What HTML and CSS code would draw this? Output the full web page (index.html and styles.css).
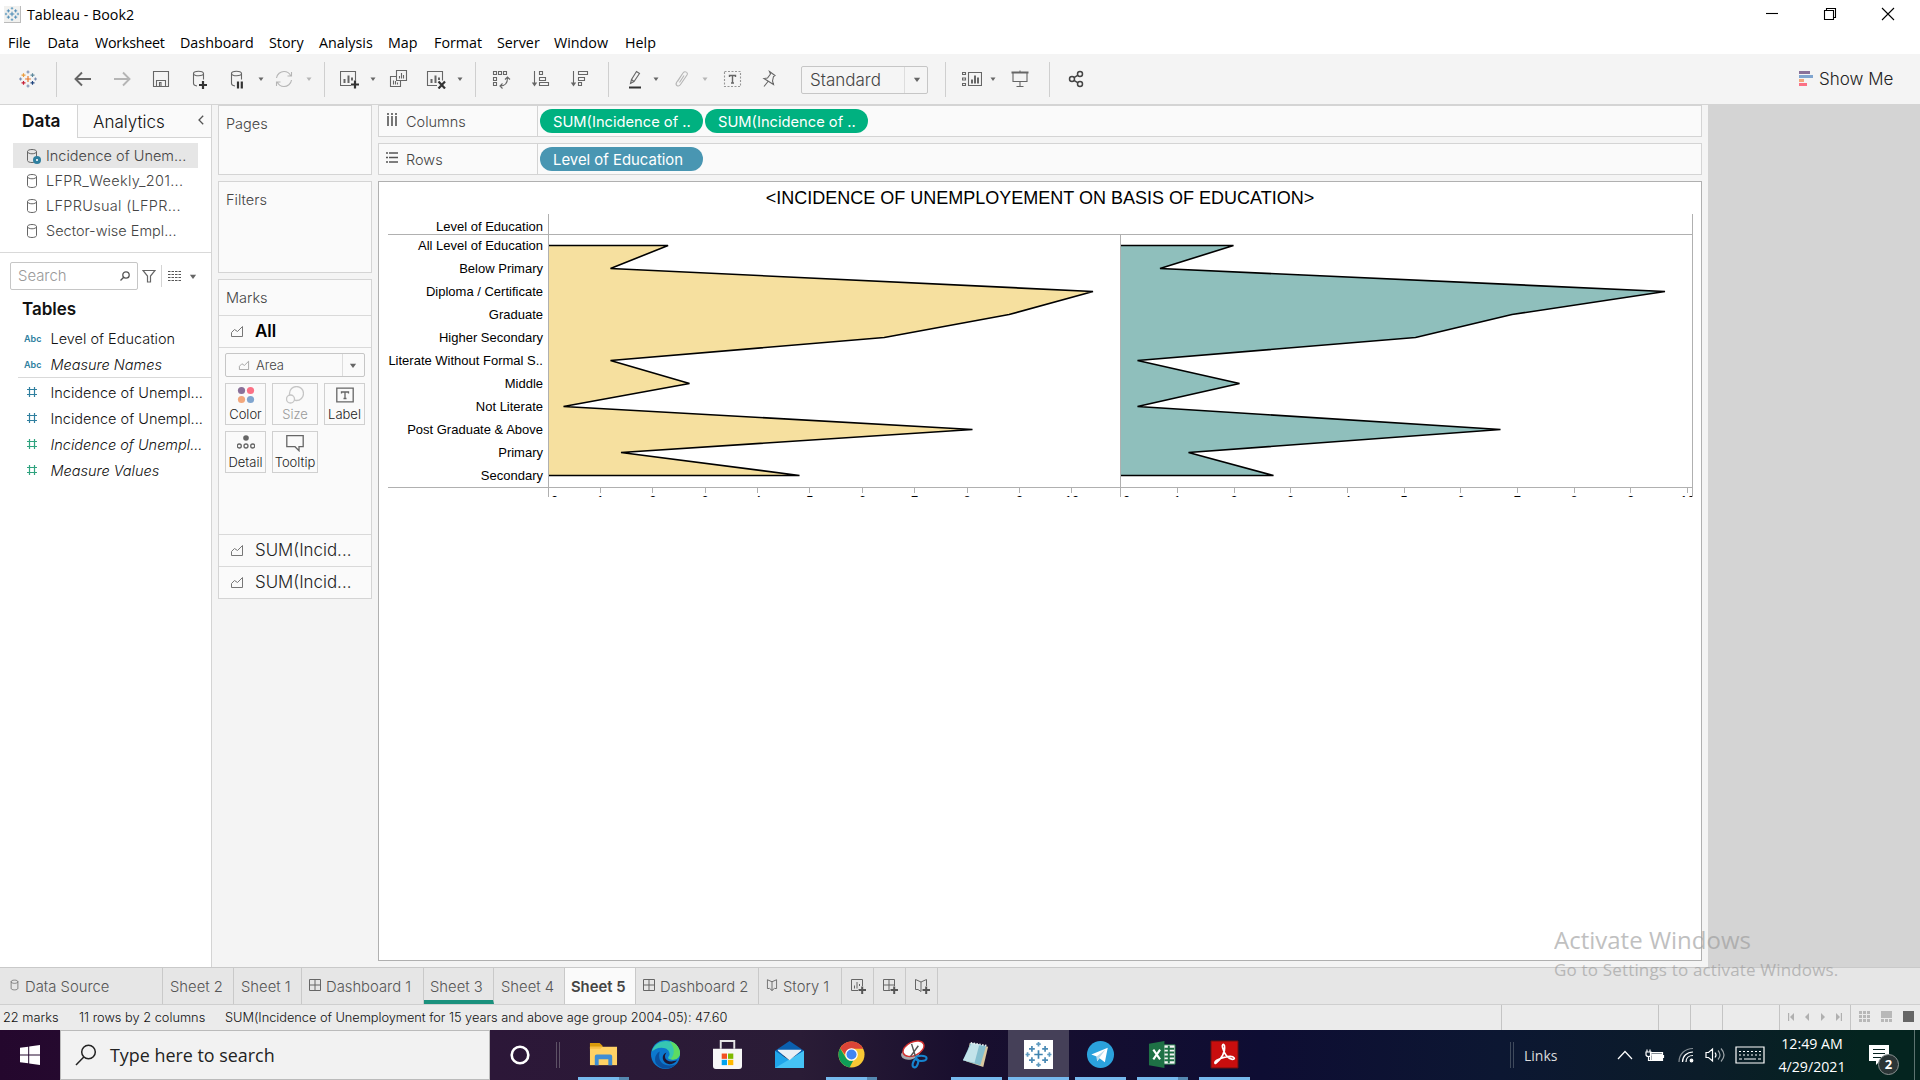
FILE: index.html
```html
<!DOCTYPE html>
<html lang="en">
<head>
<meta charset="utf-8">
<title>Tableau - Book2</title>
<link rel="stylesheet" href="styles.css">
</head>
<body>
<svg class="defs" width="0" height="0">
  <symbol id="caret" viewBox="0 0 8 20"><path d="M1.5 8.5h5L4 12z" fill="currentColor"/></symbol>
  <symbol id="db" viewBox="0 0 12 16"><path d="M1.5 3.5v9c0 1.200 2 2 4.500 2s4.500-.8 4.500-2v-9c0-1.200-2-2-4.500-2s-4.500.8-4.500 2c0 1.300 2 2.300 4.500 2.300s4.500-1 4.500-2.300" fill="none" stroke="currentColor"/></symbol>
  <symbol id="area" viewBox="0 0 14 12"><path d="M1.500 11.500V7.500L4.500 4.500L7.500 6.500L12.500 1.500v10z" fill="none" stroke="currentColor"/></symbol>
  <symbol id="hash" viewBox="0 0 12 12"><path d="M3.500 1v10M8.500 1v10M1 3.500h10M1 8.500h10" fill="none" stroke="currentColor" stroke-width="1.200"/></symbol>
  <symbol id="dash" viewBox="0 0 12 12"><path d="M.5.5h11v11H.500zM6 .5v11M.5 6h11" fill="none" stroke="currentColor"/></symbol>
  <symbol id="book" viewBox="0 0 12 13"><path d="M6 3v9.500M6 3L1 .8v9.500h2M6 3l5-2.200v9.500H9M6 12.500L3.200 10M6 12.500L8.800 10" fill="none" stroke="currentColor"/></symbol>
  <symbol id="logo" viewBox="0 0 20 20"><path d="M10 6.800v6.400M6.800 10h6.400" class="l1"/><path d="M5 3.500v4.400M2.800 5.700h4.400" class="l2"/><path d="M15 3.500v4.400M12.800 5.700h4.400" class="l3"/><path d="M5 12.100v4.400M2.800 14.300h4.400" class="l4"/><path d="M15 12.100v4.400M12.800 14.300h4.400" class="l5"/><path d="M10 .5v3.400M8.300 2.200h3.400M10 16.100v3.400M8.300 17.800h3.400M1.700 8.300v3.400M0 10h3.400M18.300 8.300v3.400M16.600 10H20" class="l6"/></symbol>
</svg>

<div class="window">
  <header class="titlebar">
    <svg class="app-icon" viewBox="-1 -1 22 22"><use href="#logo" width="20" height="20"/></svg>
    <span class="app-title">Tableau - Book2</span>
    <div class="window-buttons">
      <svg viewBox="0 0 14 14"><path d="M1 6.500h12"/></svg>
      <svg viewBox="0 0 14 14"><path d="M1.500 3.500h9v9h-9zM3.500 3.500v-2h9v9h-2"/></svg>
      <svg viewBox="0 0 14 14"><path d="M1 1l12 12M13 1L1 13"/></svg>
    </div>
  </header>
  <nav class="menubar">
    <span>File</span><span>Data</span><span class="tight">Worksheet</span><span>Dashboard</span><span>Story</span><span>Analysis</span><span>Map</span><span>Format</span><span>Server</span><span>Window</span><span>Help</span>
  </nav>

  <div class="toolbar">
    <svg class="icon color-logo" viewBox="0 0 20 20"><use href="#logo" x="1" y="1" width="18" height="18"/></svg>
    <i class="sep"></i>
    <svg class="icon bold" viewBox="0 0 20 20"><path d="M18 10H3M9 3.500L2.500 10L9 16.500"/></svg>
    <svg class="icon bold off" viewBox="0 0 20 20"><path d="M2 10h15M11 3.500L17.500 10L11 16.500"/></svg>
    <svg class="icon" viewBox="0 0 20 20"><path d="M2.500 2.500h15v15h-15zM5.500 17.500v-6h9v6M8.500 17v-3.500h1.500V17"/></svg>
    <svg class="icon" viewBox="0 0 20 20"><path d="M3.500 4.500v10c0 1.500 1 2 3.500 2.500M13.500 4.500v6M3.500 4.500c0-3 10-3 10 0s-10 3-10 0"/><path class="dark" d="M9 16h8M13 12v8"/></svg>
    <svg class="icon" viewBox="0 0 20 20"><path d="M4.500 4.500v10c0 1.500 1 2 3.500 2.500M14.500 4.500v6M4.500 4.500c0-3 10-3 10 0s-10 3-10 0"/><path class="dark" d="M11 12.500v7M14.800 12.500v7"/></svg>
    <svg class="caret"><use href="#caret"/></svg>
    <svg class="icon off" viewBox="0 0 20 20"><path d="M2.500 9C3 5 6.500 2.500 10 2.500c3 0 5.500 1.500 6.800 4.500M17.500 11c-.5 4-4 6.500-7.500 6.500c-3 0-5.500-1.500-6.800-4.500M13.500 7h4V3M6.500 13h-4v4"/></svg>
    <svg class="caret off"><use href="#caret"/></svg>
    <i class="sep"></i>
    <svg class="icon" viewBox="0 0 20 20"><path d="M11 16.500H.5v-14h15v9"/><path class="mid" d="M4.500 14v-4M8.500 14V6.500M12 11.500V8.500"/><path class="dark" d="M11 15.500h8M15 11.500v8"/></svg>
    <svg class="caret"><use href="#caret"/></svg>
    <svg class="icon" viewBox="0 0 20 20"><path d="M7.500 1.500h10v10h-10zM7 7.500H1.500v10h10V12M10.500 9.500V7M12.500 9.500V4M14.500 9.500V6M4.500 15.500v-4M6.500 15.500V12M8.500 15.500v-2"/></svg>
    <svg class="icon" viewBox="0 0 20 20"><path d="M11 16.500H1.500v-14h15v9"/><path class="mid" d="M5.500 14v-4M9.500 14V6.500M13 11V8.500"/><path class="dark" d="M12.500 12.500l6.500 7M19 12.500l-6.500 7"/></svg>
    <svg class="caret"><use href="#caret"/></svg>
    <i class="sep"></i>
    <svg class="icon" viewBox="0 0 20 20"><path d="M2.500 2.500h3v3h-3zM7.500 2.500h3v3h-3zM12.500 2.500h3v3h-3zM2.500 8.500h3v3h-3zM2.500 13.500h3v3h-3zM9 17c5 0 7.500-3 7.500-8M11.500 14.500L9 17l2.500 2.500M14 10.500L16.500 8L19 10.500"/></svg>
    <svg class="icon" viewBox="0 0 20 20"><path d="M3.500 2v13M8.500 2.500h3v3h-3zM8.500 8.500h6v3h-6zM8.500 13.500h9v3h-9z"/><path class="fill" d="M.8 13.500h5.400L3.500 17.500z"/></svg>
    <svg class="icon" viewBox="0 0 20 20"><path d="M3.500 2v13M8.500 2.500h9v3h-9zM8.500 8.500h6v3h-6zM8.500 13.500h3v3h-3z"/><path class="fill" d="M.8 13.500h5.400L3.500 17.500z"/></svg>
    <i class="sep"></i>
    <svg class="icon" viewBox="0 0 20 20"><path d="M5.500 14.500l1-4L11.500 2.500l3 2L9 12.500zM6.500 10.500l2.500 2"/><path class="dark mid" d="M4 18.500h12"/></svg>
    <svg class="caret"><use href="#caret"/></svg>
    <svg class="icon off" viewBox="0 0 20 20"><path d="M6.500 12.500l5.500-8.500c2-2.500 5.500-.5 4 2L9.500 15.500c-2 3-5.500 1-4-2L11 5.500M8.500 13.500L13 6.500"/></svg>
    <svg class="caret off"><use href="#caret"/></svg>
    <svg class="icon" viewBox="-1 0 20 20"><path stroke-dasharray="2 1.500" d="M1.500 2.500h16v15h-16z" opacity=".65"/><path d="M6.500 8V6.500h6V8M9.500 6.500v7.500M8 14h3" stroke-width="1.400"/></svg>
    <svg class="icon" viewBox="0 0 20 20"><path d="M10.500 2.500l5.500 4-1.500 1-1 4.500 1 3.500L5 9.500l3.500-.5 3-4zM9 12.500l-4 5"/></svg>
    <div class="fit-select"><span>Standard</span><svg class="caret big"><use href="#caret"/></svg></div>
    <i class="sep"></i>
    <svg class="icon" viewBox="0 0 20 20"><path d="M.5 3.500h3v2h-3zM.5 9h3v2h-3zM.5 14.500h3v2h-3zM6.500 3.500h13v13h-13z"/><path class="mid" d="M10 14.500v-4M13 14.500V6.500M16 14.500v-6"/></svg>
    <svg class="caret"><use href="#caret"/></svg>
    <svg class="icon" viewBox="0 0 20 20"><path class="mid" d="M1.500 3.500h17"/><path d="M3 4v8.500h14V4M10 12.500v5M6.500 17.500h7M10 1.500v2"/></svg>
    <i class="sep"></i>
    <svg class="icon share" viewBox="0 0 20 20"><circle cx="6" cy="10" r="2.500"/><circle cx="14" cy="5" r="2.500"/><circle cx="14" cy="15" r="2.500"/><path d="M8 8.700l4-2.500M8 11.300l4 2.500"/></svg>
    <div class="show-me">
      <svg viewBox="0 0 14 16"><path fill="#8a7199" d="M0 0h11v3H0z"/><path fill="#80a5cf" d="M0 4h14v3H0z"/><path fill="#f2a77c" d="M0 8h5v3H0z"/><path fill="#fb7185" d="M0 12h8v3H0z"/></svg>
      <span>Show Me</span>
    </div>
  </div>

  <main class="workspace">
    <aside class="data-pane">
      <div class="pane-tabs"><b>Data</b><div><span>Analytics</span><svg viewBox="0 0 6 10"><path d="M5.200.7L1 5l4.200 4.300"/></svg></div></div>
      <ul class="sources">
        <li class="selected"><svg viewBox="0 0 12 16"><use href="#db"/></svg><em></em>Incidence of Unem...</li>
        <li class="loose"><svg viewBox="0 0 12 16"><use href="#db"/></svg>LFPR_Weekly_201...</li>
        <li class="loose"><svg viewBox="0 0 12 16"><use href="#db"/></svg>LFPRUsual (LFPR...</li>
        <li><svg viewBox="0 0 12 16"><use href="#db"/></svg>Sector-wise Empl...</li>
      </ul>
      <div class="search-row">
        <div class="search"><span>Search</span><svg viewBox="0 0 10 10"><circle cx="6" cy="4" r="3.200"/><path d="M3.700 6.300L.5 9.500"/></svg></div>
        <svg class="funnel" viewBox="0 0 14 14"><path d="M1 1.500h12L8.500 7v6h-3V7z"/></svg>
        <i></i>
        <svg class="grid-view" viewBox="0 0 13 10"><path d="M0 .5h13M0 3.500h13M0 6.500h13M0 9.500h13" stroke-dasharray="2.500 1"/></svg>
        <svg class="caret big"><use href="#caret"/></svg>
      </div>
      <h2>Tables</h2>
      <ul class="fields dims">
        <li><abbr>Abc</abbr>Level of Education</li>
        <li class="gen"><abbr>Abc</abbr>Measure Names</li>
      </ul>
      <ul class="fields">
        <li><svg><use href="#hash"/></svg>Incidence of Unempl...</li>
        <li><svg><use href="#hash"/></svg>Incidence of Unempl...</li>
        <li class="gen"><svg class="green"><use href="#hash"/></svg>Incidence of Unempl...</li>
        <li class="gen"><svg class="green"><use href="#hash"/></svg>Measure Values</li>
      </ul>
    </aside>

    <section class="cards">
      <div class="card pages">Pages</div>
      <div class="card filters">Filters</div>
      <div class="card marks">
        <div class="marks-title">Marks</div>
        <div class="mark-layer all"><svg><use href="#area"/></svg><b>All</b></div>
        <div class="mark-body">
          <div class="mark-type"><svg><use href="#area"/></svg><span>Area</span><svg class="caret big"><use href="#caret"/></svg></div>
          <div class="mark-buttons">
            <div><svg viewBox="0 0 18 18"><circle cx="4.500" cy="4.500" r="3.600" fill="#8a7199"/><circle cx="13.500" cy="4.500" r="3.600" fill="#fb7185"/><circle cx="4.500" cy="13.500" r="3.600" fill="#f2a77c"/><circle cx="13.500" cy="13.500" r="3.600" fill="#80a5cf"/></svg>Color</div>
            <div class="disabled"><svg viewBox="0 0 18 18"><circle cx="10.500" cy="7.500" r="7" class="ln"/><circle cx="4.500" cy="13" r="4" class="ln bg"/></svg><span>Size</span></div>
            <div><svg viewBox="0 0 18 18"><path class="ln" stroke-width="1.500" d="M.8 2.200h16.400v13.600H.8zM5.500 7.500V6h7v1.500M9 6v6.500M7.500 12.500h3"/></svg>Label</div>
            <div><svg viewBox="0 0 18 18"><circle cx="9" cy="4" r="2.800" fill="#666"/><circle cx="2.300" cy="12" r="2" class="ln"/><circle cx="9" cy="12" r="2" class="ln"/><circle cx="15.700" cy="12" r="2" class="ln"/></svg>Detail</div>
            <div><svg viewBox="0 0 18 18"><path class="ln" stroke-width="1.500" d="M.8 1.700h16.400v11H13v4l-4-4H.8z"/></svg>Tooltip</div>
          </div>
        </div>
        <div class="mark-layer"><svg><use href="#area"/></svg>SUM(Incid...</div>
        <div class="mark-layer"><svg><use href="#area"/></svg>SUM(Incid...</div>
      </div>
    </section>

    <section class="sheet">
      <div class="shelf"><div class="shelf-name"><svg viewBox="0 0 12 14"><path d="M2 3v10M6 3v10M10 3v10M2 0v2M6 0v2M10 0v2"/></svg>Columns</div><span class="pill green">SUM(Incidence of ..</span><span class="pill green">SUM(Incidence of ..</span></div>
      <div class="shelf"><div class="shelf-name"><svg viewBox="0 0 12 14"><path d="M3 2h9M3 6.500h9M3 11h9M0 2h2M0 6.500h2M0 11h2"/></svg>Rows</div><span class="pill blue">Level of Education</span></div>
      <div class="view">
        <h1>&lt;INCIDENCE OF UNEMPLOYEMENT ON BASIS OF EDUCATION&gt;</h1>
        <div class="chart">
          <div class="row-header">
            <div class="header-title">Level of Education</div>
            <div class="categories"><span>All Level of Education</span><span>Below Primary</span><span>Diploma / Certificate</span><span>Graduate</span><span>Higher Secondary</span><span>Literate Without Formal S..</span><span>Middle</span><span>Not Literate</span><span>Post Graduate &amp; Above</span><span>Primary</span><span>Secondary</span></div>
          </div>
          <div class="plot">
            <div class="panes">
              <svg class="pane" viewBox=".5 0 571 252"><path class="gold" d="M0 10.500L119.600 10.500L62 33.500L544.500 56.500L460.600 79.500L335.700 102.500L62 125.500L141 148.500L15 171.500L424 194.500L72.500 217.500L251 240.500H0"/></svg>
              <svg class="pane" viewBox="0 0 571 252"><path class="teal" d="M0 10.500L112.500 10.500L39 33.500L544 56.500L391 79.500L294.500 102.500L16.500 125.500L118.500 148.500L16.500 171.500L379.500 194.500L67.500 217.500L152.500 240.500H0"/></svg>
            </div>
            <div class="axes">
              <div class="axis first"><span>0</span><span>1</span><span>2</span><span>3</span><span>4</span><span>5</span><span>6</span><span>7</span><span>8</span><span>9</span><span>10</span></div>
              <div class="axis second"><span>0</span><span>1</span><span>2</span><span>3</span><span>4</span><span>5</span><span>6</span><span>7</span><span>8</span><span>9</span><span>10</span></div>
            </div>
          </div>
        </div>
      </div>
    </section>
    <div class="outside"></div>
  </main>

  <div class="sheet-tabs">
    <div class="source"><svg viewBox="0 0 12 16"><use href="#db"/></svg>Data Source</div>
    <div>Sheet 2</div><div>Sheet 1</div>
    <div><svg viewBox="0 0 12 12"><use href="#dash"/></svg>Dashboard 1</div>
    <div class="marked">Sheet 3</div><div>Sheet 4</div><div class="active">Sheet 5</div>
    <div><svg viewBox="0 0 12 12"><use href="#dash"/></svg>Dashboard 2</div>
    <div><svg viewBox="0 0 12 13"><use href="#book"/></svg>Story 1</div>
    <div class="add"><svg viewBox="0 0 16 16"><path d="M8 12.500H1.500V1.500h11V8M4.500 10.500v-3M7 10.500V4M9.500 8V6"/><path class="dark" d="M8.500 12H16M12.200 8.500V16"/></svg></div>
    <div class="add"><svg viewBox="0 0 16 16"><path d="M8 12.500H1.500V1.500h11V8M7 1.500v11M1.500 7h11"/><path class="dark" d="M8.500 12H16M12.200 8.500V16"/></svg></div>
    <div class="add"><svg viewBox="0 0 16 16"><path d="M7 4v9.500M7 4L1.500 1.500v10H4l3 2M7 4l5.500-2.500V8"/><path class="dark" d="M8.500 12H16M12.200 8.500V16"/></svg></div>
  </div>

  <footer class="status">
    <span class="s1">22 marks</span><span class="s2">11 rows by 2 columns</span><span class="s3">SUM(Incidence of Unemployment for 15 years and above age group 2004-05): 47.60</span>
    <div class="status-cells">
      <i></i><i></i><i></i><i></i>
      <div class="pager">
        <svg viewBox="0 0 8 8"><path d="M1 0h1.200v8H1zM7 0v8L3 4z"/></svg><svg viewBox="0 0 8 8"><path d="M6 0v8L2 4z"/></svg><svg viewBox="0 0 8 8"><path d="M2 0v8l4-4z"/></svg><svg viewBox="0 0 8 8"><path d="M5.800 0H7v8H5.800zM1 0v8l4-4z"/></svg>
      </div>
      <div class="view-modes">
        <svg viewBox="0 0 11 11"><path d="M0 0h3v3H0zM4 0h3v3H4zM8 0h3v3H8zM0 4h3v3H0zM4 4h3v3H4zM8 4h3v3H8zM0 8h3v3H0zM4 8h3v3H4zM8 8h3v3H8z"/></svg>
        <svg viewBox="0 0 11 11"><path d="M0 0h11v7H0zM0 8h3v3H0zM4 8h3v3H4zM8 8h3v3H8z"/></svg>
        <svg class="on" viewBox="0 0 11 11"><path d="M0 0h11v11H0z"/></svg>
      </div>
    </div>
  </footer>

  <div class="taskbar">
    <div class="start"><svg viewBox="0 0 20 20"><path fill="#fff" d="M0 2.800L8.200 1.700v7.800H0zM9.200 1.500L20 0v9.500H9.200zM0 10.500h8.200v7.800L0 17.200zM9.200 10.500H20V20L9.200 18.500z"/></svg></div>
    <div class="task-search"><svg viewBox="0 0 22 22"><circle cx="13.500" cy="8" r="6.800"/><path d="M8.800 13L1 21"/></svg><span>Type here to search</span></div>
    <div class="cortana"><svg viewBox="0 0 20 20"><circle cx="10" cy="10" r="8.300" fill="none" stroke="#fff" stroke-width="2.600"/></svg></div>
    <div class="grip"></div>
    <div class="apps">
      <div class="app open multi"><svg viewBox="0 0 30 30"><path fill="#d99a0b" d="M1 3h10l3 3v5H1z"/><path fill="#ffd265" d="M1 7h28v19H1z"/><path fill="#f6bd43" d="M1 7h13l-2 2H1z"/><path fill="#3f8ed4" d="M6 26v-9q0-2 2-2h14q2 0 2 2v9h-4v-6H10v6z"/></svg></div>
      <div class="app"><svg viewBox="0 0 30 30"><circle cx="15" cy="15" r="15" fill="#0c78ce"/><path fill="#36c6b2" d="M1 12C4-2 26-3 30 12c1 7-5 9-9 8-4 0-4-2-2-4 1-4-2-8-8-8-5 0-8 2-10 4z"/><path fill="#5ddb62" d="M19 1c8 2 11 8 11 13-1 6-6 7-10 6 5-5 5-12-1-19z"/><path fill="#0a4f9e" d="M9 12c-3 12 6 17 17 13-6 6-16 6-21-1-2-5 0-10 4-12z"/><path fill="#1d1633" d="M16 13c-4 5 0 12 11 8-2 3-5 4-8 4-8-1-9-10-3-12z"/></svg></div>
      <div class="app"><svg viewBox="0 0 30 30"><path fill="none" stroke="#e6e6e6" stroke-width="2" d="M8 9V1h14v8"/><path fill="#f7f7f7" d="M0 9h30v18q0 3-3 3H3q-3 0-3-3z"/><path fill="#f25022" d="M9 14h5.500v5.500H9z"/><path fill="#7fba00" d="M15.500 14H21v5.500h-5.500z"/><path fill="#00a4ef" d="M9 20.500h5.500V26H9z"/><path fill="#ffb900" d="M15.500 20.500H21V26h-5.500z"/></svg></div>
      <div class="app"><svg viewBox="0 0 30 30"><path fill="#0a5fae" d="M0 11L15 1l15 10v5H0z"/><path fill="#1fa5ea" d="M0 11v18h30V11L15 21z"/><path fill="#45c3f5" d="M0 29L30 11v18z"/><path fill="#e9eff5" d="M3 10h24v1L15 21 3 11z"/></svg></div>
      <div class="app open multi"><svg viewBox="0 0 30 30"><circle cx="15" cy="15" r="13.500" fill="#f8c834"/><path fill="#db4437" d="M3.200 8.500A13.500 13.500 0 0127 9H15a6 6 0 00-6 7z"/><path fill="#0f9d58" d="M3.200 8.500L9 18a6 6 0 008 3l-4 7.400A13.500 13.500 0 013.200 8.500z"/><circle cx="15" cy="15" r="6.500" fill="#fff"/><circle cx="15" cy="15" r="5.200" fill="#4285f4"/></svg></div>
      <div class="app"><svg viewBox="0 0 30 30"><ellipse cx="12" cy="14" rx="10" ry="6" fill="#a8a8ad" transform="rotate(-15 12 14)"/><ellipse cx="15" cy="9" rx="11.500" ry="7" fill="#fff" stroke="#d02f2f" stroke-width="1.500" transform="rotate(-25 15 9)"/><path stroke="#555" stroke-width="1.500" d="M13 4l4 13M20 6l-8 11"/><g fill="none" stroke="#1684cf" stroke-width="2.200"><ellipse cx="23" cy="19" rx="5.500" ry="2.700"/><ellipse cx="17" cy="24" rx="2.500" ry="4.500" transform="rotate(20 17 24)"/></g></svg></div>
      <div class="app open"><svg viewBox="0 0 30 30"><path fill="#d9c8a0" d="M8 3l19 4-5 21L4 22z"/><path fill="#86bfcf" d="M9 3l16 3-6 20L1 21z"/><path fill="#c3e3ea" d="M10 3l8 1.500-5 19L1 21z"/><path stroke="#e7eef0" stroke-width="2" stroke-dasharray="1.500 1.500" d="M9 3l17 3"/></svg></div>
      <div class="app open current"><svg class="task-logo" viewBox="-1 -1 22 22"><path fill="#fff" d="M-1-1h22v22H-1z"/><use href="#logo" width="20" height="20"/></svg></div>
      <div class="app open"><svg viewBox="0 0 30 30"><circle cx="15" cy="15" r="14" fill="#2ba2dc"/><path fill="#fff" d="M5.500 15L22.500 8l-3 15-5.500-4-2.500 3-.5-5z"/><path fill="#b9d9ea" d="M11 17l9-7-6 8-2.500 4z"/></svg></div>
      <div class="app open multi"><svg viewBox="0 0 30 30"><path fill="#f6f6f6" stroke="#1e7145" d="M15 5h13v20H15z"/><path stroke="#1e7145" stroke-width="2" d="M17 9h10M17 13h10M17 17h10M17 21h10M21.500 6v18"/><path fill="#1e7145" d="M1 4l16-3v28L1 26z"/><path fill="none" stroke="#fff" stroke-width="2.200" d="M5.500 10l7 10M12.500 10l-7 10"/></svg></div>
      <div class="app open"><svg viewBox="0 0 30 30"><path fill="#c80e0e" stroke="#5f1414" d="M1 1h28v28H1z"/><path fill="none" stroke="#fff" stroke-width="1.700" d="M6 24c6-4 10-12 9-18-1-3-3-1-2 2 2 7 5 11 10 12 4 0 2-3-2-3-6 0-10 2-14 4-3 2-2 4-1 3z"/></svg></div>
    </div>
    <div class="tray">
      <div class="grip"></div><span class="links">Links</span>
      <svg class="chev" viewBox="0 0 16 10"><path d="M1 9l7-7.500L15 9"/></svg>
      <svg class="batt" viewBox="0 0 20 14"><path d="M5.500 4.500v8h12v-8zM18.500 7v3M1 4h5v2.500q0 2-2.500 2T1 6.500zM2 1.500V4M5 1.500V4M3.500 8v4.500h2"/><path fill="#fff" d="M7 6h9.500v5.500H7z"/></svg>
      <svg class="wifi" viewBox="0 0 16 16"><path opacity=".5" d="M1 15C1 7 7 1.500 15 1.500"/><path d="M4.500 15C4.500 9 9 5 15 5M8 15c0-4 3-6.500 7-6.500"/><circle cx="13.500" cy="13.500" r="1.300" fill="#fff"/></svg>
      <svg class="vol" viewBox="0 0 20 16"><path d="M1 5.500v5h2.500L7.500 14V2L3.500 5.500zM10 5.500q2 2.500 0 5"/><path opacity=".6" d="M13 3.500q4 4.500 0 9M16 1.500q6 6.500 0 13"/></svg>
      <svg class="kbd" viewBox="0 0 30 18"><path d="M1 1h28v16H1z"/><path stroke-dasharray="2 2" d="M4 5.500h22M4 9h22"/><path stroke-dasharray="3 2 12 2 3" d="M4 13h22"/></svg>
      <div class="clock"><span>12:49 AM</span><span>4/29/2021</span></div>
      <div class="notice"><svg viewBox="0 0 20 20"><path fill="#fff" d="M0 0h20v16h-9l-4 4v-4H0z"/><path stroke="#06211f" d="M4 4.500h12M4 8.500h12M4 12.500h8"/></svg><b>2</b></div>
    </div>
  </div>

  <div class="watermark"><p>Activate Windows</p><span>Go to Settings to activate Windows.</span></div>
</div>
</body>
</html>
```
FILE: styles.css
```css
* { box-sizing: border-box; }
body { margin: 0; background: #fff; color: #000; font-family: "Open Sans", "Noto Sans", sans-serif; }
ul, h1, h2, p { margin: 0; padding: 0; list-style: none; }
.defs { position: absolute; }
svg { display: block; flex: none; fill: none; }

.window { position: relative; width: 1920px; height: 1080px; overflow: hidden; display: flex; flex-direction: column; }

/* title and menu */
.titlebar { height: 29px; display: flex; align-items: center; padding-left: 4px; }
.app-icon { width: 17px; height: 17px; background: #f1f1ef; border-right: 1px solid #bbb; border-bottom: 1px solid #bbb; }
.app-title { margin-left: 6px; font-size: 14.300px; line-height: 18px; }
.window-buttons { margin-left: auto; display: flex; gap: 44px; padding: 0 25px 1px 0; }
.window-buttons svg { width: 14px; height: 14px; stroke: #000; stroke-width: 1.100; }
.menubar { height: 25px; padding-left: 8px; display: grid; grid-template-columns: 39.500px 47.500px 85px 89px 50px 69px 46px 63px 57px 71px 40px; align-items: center; font-size: 14.300px; white-space: nowrap; line-height: 22px; padding-top: 3px; }
.menubar .tight { letter-spacing: -.25px; }

/* tableau mark, one colour per group of crosses */
.l1, .l2, .l3, .l4, .l5, .l6 { stroke-width: 1.300; fill: none; }
.l1 { stroke: var(--c1, #3f84b0); }
.l2 { stroke: var(--c2, #4b8bb5); }
.l3 { stroke: var(--c3, #4b8bb5); }
.l4 { stroke: var(--c4, #4b8bb5); }
.l5 { stroke: var(--c5, #4b8bb5); }
.l6 { stroke: var(--c6, #5f9bc0); }
.toolbar .color-logo { --c1: #e8762b; --c2: #eb9c3c; --c3: #5b879b; --c4: #c72037; --c5: #1f447e; --c6: #7b8fb3; }

/* toolbar */
.toolbar { height: 51px; flex: none; background: #f4f4f4; border-bottom: 1px solid #d4d4d4; padding: 0 0 0 18px; display: grid; align-items: center; grid-template-columns: 38px 17px 39px 39px 39px 37px 30px 17px 31px 19px 16px 29px 20px 37px 30px 19px 16px 40px 39px 38px 17px 27px 19px 30px 21px 37px 42px 144px 17px 27px 21px 39px 17px 733px auto; }
.icon { width: 20px; height: 20px; stroke: #666; stroke-width: 1.100; }
.icon.bold { stroke-width: 1.900; }
.icon.off { stroke: #b5b5b5; }
.icon .dark { stroke: #333; stroke-width: 2.200; }
.icon .mid { stroke-width: 2; }
.icon .fill { fill: #666; stroke: none; }
.icon.share { stroke: #444; stroke-width: 1.500; }
.caret { width: 8px; height: 20px; color: #666; }
.caret.off { color: #b5b5b5; }
.caret.big { width: 10px; height: 25px; }
.sep { width: 1px; height: 35px; background: #cfcfcf; }
.fit-select { width: 127px; height: 28px; border: 1px solid #c6c6c6; border-radius: 2px; display: flex; align-items: center; font-size: 17px; color: #444; background: #f5f5f5; margin-top: 1px; }
.fit-select span { width: 103px; line-height: 26px; padding-left: 8px; border-right: 1px solid #ddd; }
.fit-select .caret { margin-left: 7px; }
.show-me { display: flex; align-items: center; gap: 6px; font-size: 17px; color: #222; white-space: nowrap; }
.show-me svg { width: 14px; height: 16px; }
.toolbar, .workspace, .sheet-tabs, .status { font-family: Inter, "Open Sans", sans-serif; font-weight: 300; }

/* workspace */
.workspace { height: 862px; flex: none; display: flex; background: #f4f4f4; }
.data-pane { width: 212px; background: #fff; border-right: 1px solid #d4d4d4; color: #111; }
.pane-tabs { height: 33px; display: flex; }
.pane-tabs b { width: 77px; padding-left: 22px; font-size: 17.300px; font-weight: 600; line-height: 32px; }
.pane-tabs div { flex: 1; border-left: 1px solid #d4d4d4; border-bottom: 1px solid #d4d4d4; background: #fafafa; display: flex; align-items: center; justify-content: space-between; padding: 1px 7px 0 15px; font-size: 17px; }
.pane-tabs svg { width: 6px; height: 10px; stroke: #555; stroke-width: 1.300; margin-bottom: 3px; }
.sources { padding: 5px 13px 0; height: 115px; border-bottom: 1px solid #d9d9d9; font-size: 14.500px; color: #444; }
.sources li { position: relative; height: 25px; display: flex; align-items: center; padding-left: 13px; white-space: nowrap; }
.sources .loose { letter-spacing: .3px; }
.sources svg { width: 12px; height: 16px; margin-right: 8px; color: #666; }
.sources .selected { background: #e6e6e6; }
.sources em { position: absolute; left: 20px; top: 13px; width: 8px; height: 8px; border-radius: 50%; background: radial-gradient(circle, #fff .5px, #2f7f9f 1.500px); }
.search-row { display: flex; align-items: center; margin: 9px 0 0 10px; height: 28px; }
.search { width: 128px; height: 28px; border: 1px solid #c6c6c6; border-radius: 2px; display: flex; align-items: center; justify-content: space-between; padding: 0 7px; font-size: 14.900px; line-height: 20px; color: #999; }
.search span { padding-bottom: 1px; }
.search svg { width: 10px; height: 10px; stroke: #555; stroke-width: 1.300; }
.funnel { width: 14px; height: 14px; margin-left: 4px; stroke: #666; stroke-width: 1.200; }
.search-row i { width: 1px; height: 22px; background: #d4d4d4; margin: 0 6px 0 5px; }
.grid-view { width: 13px; height: 10px; stroke: #555; stroke-width: 1.200; }
.search-row .caret { margin-left: 7px; }
.data-pane h2 { font-size: 17px; font-weight: 600; line-height: 24px; margin: 7px 0 0 22px; height: 28px; }
.fields { font-size: 14.500px; }
.fields li { height: 26px; display: flex; align-items: center; white-space: nowrap; padding-left: 24px; }
.dims { margin-left: 18px; border-bottom: 1px solid #d9d9d9; height: 53px; margin-bottom: 1px; }
.dims li { padding-left: 6px; }
.fields abbr { width: 26.500px; color: #2f7f9f; font-size: 9px; font-weight: 600; }
.fields svg { width: 12px; height: 12px; color: #2f7f9f; margin: 0 12.500px 0 2px; }
.fields svg.green { color: #2fa37f; }
.gen { font-style: italic; }
.gen abbr { font-style: normal; }

.cards { width: 154px; margin-left: 6px; display: flex; flex-direction: column; gap: 6px; font-size: 14.500px; color: #444; }
.card { background: #fafafa; border: 1px solid #d4d4d4; padding: 9px 7px; line-height: 18px; }
.pages { height: 70px; }
.filters { height: 92px; }
.marks { height: 320px; padding: 0; }
.marks-title { height: 36px; padding: 9px 7px; border-bottom: 1px solid #d9d9d9; }
.mark-layer { height: 32px; display: flex; align-items: center; font-size: 16.900px; padding: 0 0 2px 11px; color: #222; border-bottom: 1px solid #d9d9d9; white-space: nowrap; }
.mark-layer:last-child { border: 0; }
.mark-layer svg { width: 14px; height: 12px; margin-right: 11px; color: #777; }
.mark-layer b { font-weight: 600; color: #000; font-size: 17px; }
.mark-body { height: 187px; padding: 5px 6px; border-bottom: 1px solid #d9d9d9; }
.mark-type { height: 24px; width: 140px; border: 1px solid #c6c6c6; border-radius: 2px; display: flex; align-items: center; font-size: 13px; }
.mark-type svg:first-child { width: 12px; height: 10px; color: #999; margin: 0 6px 0 12px; }
.mark-type span { width: 87px; border-right: 1px solid #ddd; line-height: 22px; }
.mark-type .caret { margin-left: 5px; }
.mark-buttons { display: grid; grid-template-columns: 41px 46px 41px; grid-auto-rows: 42px; gap: 6px; margin-top: 6px; }
.mark-buttons div { border: 1px solid #d0d0d0; display: flex; flex-direction: column; align-items: center; padding-top: 2px; font-size: 13px; color: #222; line-height: 18px; }
.mark-buttons svg { width: 18px; height: 18px; margin-bottom: 1px; }
.ln { stroke: #666; stroke-width: 1.300; }
.disabled svg { opacity: .35; }
.disabled span { color: #999; }
.bg { fill: #fafafa; }

.sheet { width: 1324px; margin-left: 6px; display: flex; flex-direction: column; gap: 6px; }
.shelf { height: 32px; flex: none; background: #fafafa; border: 1px solid #d4d4d4; display: flex; align-items: center; font-size: 14.500px; color: #444; }
.shelf-name { width: 159px; height: 30px; border-right: 1px solid #d4d4d4; display: flex; align-items: center; padding-left: 7px; }
.shelf-name svg { width: 12px; height: 14px; margin: 0 8px 2px 0; stroke: #555; stroke-width: 1.600; }
.pill { width: 163px; height: 24px; border-radius: 12px; margin-left: 2px; padding-left: 13px; color: #fff; font-size: 14.700px; font-weight: 400; line-height: 26px; white-space: nowrap; }
.pill.green { background: #00b180; }
.pill.blue { background: #4996b2; font-size: 14.900px; }
.view { height: 780px; background: #fff; border: 1px solid #b0b0b0; font-family: "Liberation Sans", Arial, sans-serif; font-weight: 400; }
.view h1 { height: 32px; padding-top: 5px; text-align: center; font-size: 18px; font-weight: 400; line-height: 22px; }
.chart { display: flex; margin: 0 8px 0 9px; height: 283px; }
.row-header { width: 160px; text-align: right; font-size: 13px; white-space: nowrap; }
.header-title { height: 21px; line-height: 26px; padding-right: 5px; border-bottom: 1px solid #b0b0b0; }
.categories { height: 253px; border-bottom: 1px solid #b0b0b0; }
.categories span { display: block; height: 23px; line-height: 21px; padding-right: 5px; }
.plot { width: 1145px; border: solid #b0b0b0; border-width: 0 1px; }
.panes { display: flex; margin-top: 20px; border: solid #b0b0b0; border-width: 1px 0; height: 254px; }
.pane { width: 571px; height: 252px; }
.pane + .pane { border-left: 1px solid #b0b0b0; width: 572px; }
.pane path { stroke: #000; stroke-width: 1.600; stroke-linejoin: bevel; }
.gold { fill: #f6e09f; }
.teal { fill: #8fbfbc; }
.axes { display: flex; height: 9px; overflow: hidden; font-size: 13px; }
.axis { display: flex; width: 571px; flex: none; overflow: hidden; }
.axis.second { border-left: 1px solid #b0b0b0; width: 572px; }
.axis span { flex: none; width: 52.400px; text-align: center; line-height: 14px; height: 22px; padding-top: 6px; background: linear-gradient(#b0b0b0, #b0b0b0) center top / 1px 5px no-repeat; }
.axis.second span { width: 56.700px; }
.axis span:first-child { width: 25.200px; background: none; text-align: left; padding-left: 2px; }
.axis.second span:first-child { width: 28px; }
.outside { flex: 1; margin-left: 6px; background: #d4d4d4; }

/* sheet tabs */
.sheet-tabs { height: 38px; flex: none; background: #e6e6e6; border-top: 1px solid #c9c9c9; border-bottom: 1px solid #cfcfcf; display: grid; grid-template-columns: 163px 71px 68px 122px 70px 71px 71px 123px 83px 32px 32px 32px; font-size: 14.800px; color: #555; white-space: nowrap; }
.sheet-tabs div { border-right: 1px solid #c9c9c9; display: flex; align-items: center; gap: 5px; padding: 1px 0 0 7px; }
.sheet-tabs .source { padding-left: 10px; gap: 6px; }
.sheet-tabs svg { width: 12px; height: 12px; color: #666; margin-bottom: 3px; }
.sheet-tabs .source svg { width: 9px; height: 12px; }
.sheet-tabs .active { background: #fafafa; font-weight: 600; color: #444; padding-left: 6px; }
.sheet-tabs .marked { border-bottom: 4px solid #1b917d; padding-top: 5px; padding-left: 6px; }
.sheet-tabs .add { padding: 0 0 0 8px; }
.sheet-tabs .add svg { width: 16px; height: 16px; stroke: #666; margin: 0; }
.sheet-tabs .dark { stroke: #555; stroke-width: 2; }

.status { height: 25px; flex: none; background: #ebebeb; display: flex; align-items: center; font-size: 12.800px; color: #111; white-space: nowrap; }
.status > span { padding-bottom: 1px; }
.s1 { width: 76px; margin-left: 3px; }
.s2 { width: 146px; }
.s3 { letter-spacing: -.03px; }
.status-cells { margin-left: auto; height: 25px; width: 419px; display: grid; grid-template-columns: 157px 32px 32px 57px 71px auto; }
.status-cells > * { border-left: 1px solid #c4c4c4; }
.pager { display: flex; align-items: center; padding: 0 0 2px 7px; gap: 8px; }
.pager svg { width: 8px; height: 8px; fill: #b0b0b0; }
.view-modes { display: flex; align-items: center; gap: 11px; padding: 0 0 2px 8px; }
.view-modes svg { width: 11px; height: 11px; fill: #b8b8b8; }
.view-modes .on { fill: #666; }

/* taskbar */
.taskbar { height: 50px; flex: none; display: flex; align-items: center; color: #fff; background: linear-gradient(90deg, #24072d 0, #2c1738 490px, #2a1c36 800px, #190f2e 960px, #0e0d33 1260px, #0c1732 1500px, #0b1c29 1700px, #04241f 1860px, #04241f); }
.start { width: 60px; padding-left: 20px; }
.start svg { width: 20px; height: 20px; }
.task-search { width: 430px; height: 50px; background: #f2f2f2; border: 1px solid #bbb; color: #222; display: flex; align-items: center; font-size: 17.900px; white-space: nowrap; }
.task-search svg { width: 22px; height: 22px; stroke: #222; stroke-width: 1.500; margin: 0 13px 0 14px; }
.cortana { width: 66px; padding-left: 20px; }
.cortana svg { width: 20px; height: 20px; }
.grip { width: 4px; height: 26px; border: solid #5e5266; border-width: 0 1px; }
.apps { display: flex; height: 50px; margin-left: 13px; gap: 1.100px; }
.app { position: relative; width: 61px; height: 50px; display: flex; align-items: center; justify-content: center; }
.app svg { width: 29px; height: 29px; margin-bottom: 1px; }
.app.open::after { content: ""; position: absolute; left: 5px; right: 5px; bottom: 0; height: 3px; background: #76b9ed; }
.app.multi::after { background: linear-gradient(90deg, #76b9ed 41px, #5588b0 41px); }
.app.current { background: #454058; }
.app.current::after { left: 0; right: 0; }
.tray { margin-left: auto; width: 410px; height: 50px; display: flex; align-items: center; }
.tray .grip { border-color: #3f4a5c; }
.tray svg { stroke: #fff; stroke-width: 1.200; }
.links { font-size: 14px; width: 93px; margin-left: 10px; color: #ddd; }
.chev { width: 16px; height: 10px; }
.batt { width: 20px; height: 14px; margin-left: 12px; }
.wifi { width: 16px; height: 16px; margin-left: 13px; }
.vol { width: 20px; height: 16px; margin-left: 11px; }
.kbd { width: 30px; height: 18px; margin-left: 10px; }
.clock { width: 90px; margin-left: 2px; text-align: center; font-size: 14.200px; line-height: 23px; margin-bottom: 1px; }
.clock span { display: block; }
.notice { position: relative; width: 20px; margin-left: 12px; }
.notice svg { width: 20px; height: 20px; stroke-width: 1; }
.notice svg path:first-child { stroke: none; }
.notice b { position: absolute; left: 9px; top: 9px; width: 21px; height: 21px; border-radius: 50%; background: #2b3536; border: 1px solid #8b9292; font-size: 13px; line-height: 19px; text-align: center; }
.notice::after { content: ""; position: absolute; left: 45px; top: -15px; width: 1px; height: 50px; background: #5d7370; }

.watermark { position: absolute; left: 1554px; top: 921px; color: #9a9a9a; opacity: .62; white-space: nowrap; }
.watermark p { font-size: 24px; line-height: 38px; }
.watermark span { font-size: 17px; line-height: 22px; display: block; letter-spacing: .17px; }
```
